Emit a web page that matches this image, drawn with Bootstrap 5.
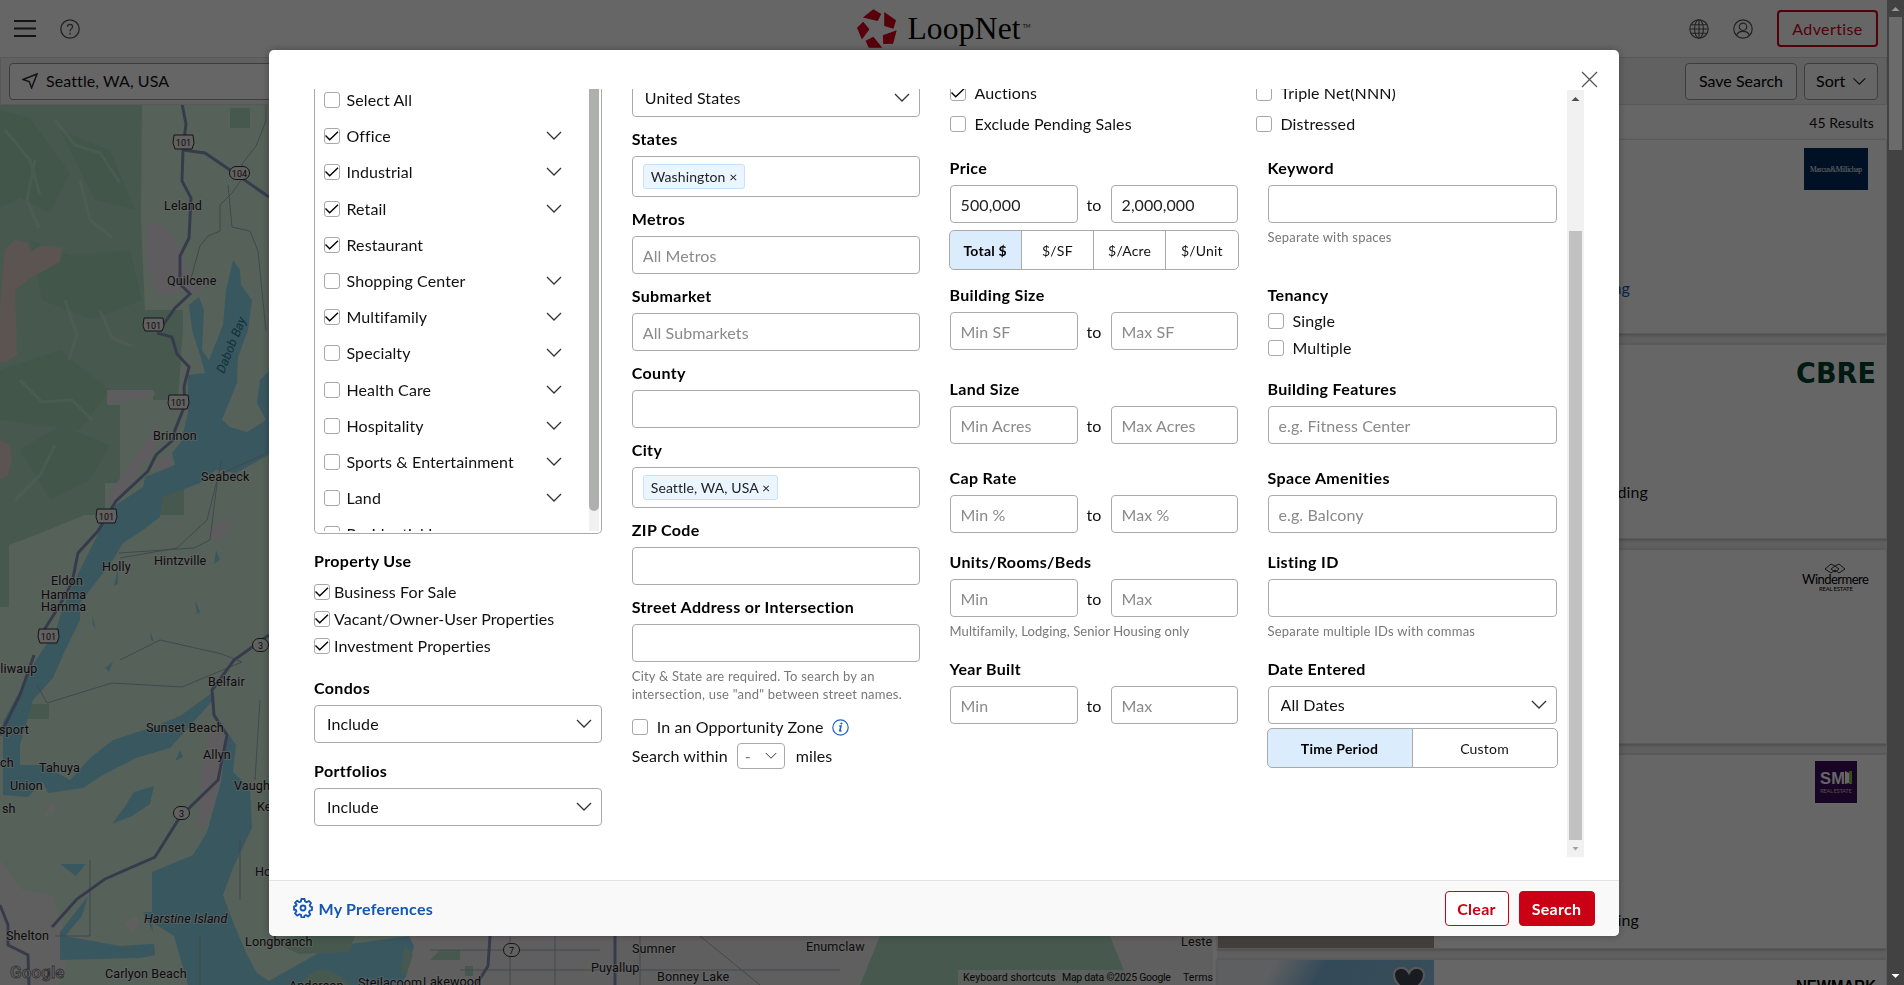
<!DOCTYPE html>
<html lang="en">
<head>
<meta charset="utf-8">
<title>LoopNet</title>
<link rel="stylesheet" href="https://cdn.jsdelivr.net/npm/bootstrap@5.3.0/dist/css/bootstrap.min.css">
<style>
html,body{height:100%;overflow:hidden}
body{font-family:Lato,"Open Sans",sans-serif;font-size:16px;color:#111;background:#fff;letter-spacing:.1px}
.page{width:1887px;height:985px;overflow:hidden}
.topbar{height:57px;flex:none}
.side{width:420px}
.subbar{height:48px;background:#f3f3f3;border:1px solid #dcdcdc}
.btn-page{height:37px;border:1px solid #999;border-radius:4px;background:#fff;font-size:16px;padding:0 11px;color:#000;white-space:nowrap}
.btn-adv{width:101px;height:37px;border:2px solid #d0021b;border-radius:4px;color:#d0021b;font-size:16px;padding:0;letter-spacing:.4px}
.place{width:420px;height:37px;border:1px solid #999;border-radius:4px;background:#fff;margin-left:8px;padding-left:12px;gap:8px}
.brandname{font-family:"Liberation Serif",serif;font-size:31.5px;line-height:40px;letter-spacing:.2px;color:#000}
.tm{font-size:5px;align-self:flex-start;margin:15px 0 0 2px}
.mapbox{width:1217px}
.results{width:670px;background:#ededed}
.resulthead{height:34px;background:#fff;font-size:14px;padding-right:13px}
.listing{height:195px;margin-bottom:10px;background:#fff;border:1px solid #e0e0e0;box-shadow:0 1px 3px rgba(0,0,0,.25);border-radius:0;flex:none}
.photo{width:216px;background:linear-gradient(#8ec3e6,#b9b2a8 80%,#a39a92)}
.sky{background:linear-gradient(120deg,#e9eef2 0 18%,#7fb8dc 34%,#9cc9e4)}
.logobox{width:82px;margin-right:9px;height:70px}
.veil{opacity:.6!important;width:1887px}
.pagebar{left:1887px;top:0;width:17px;height:985px;background:#424242;z-index:1060;padding:0 2px}
.pagebar .thumb{height:133px;background:#6b6b6b}
.pagebar svg,.formbar svg{display:block;flex:none}
.searchmodal{width:1887px;overflow:hidden}
.searchmodal .modal-dialog{max-width:1350px;margin:49.5px auto 0;width:1350px}
.searchmodal .modal-content{height:886px;border:0;border-radius:5px;overflow:hidden;color:#111;box-shadow:0 0 8px rgba(0,0,0,.3)}
.closerow{height:39.5px;padding:22px 22px 0 0;flex:none}
.closerow svg{overflow:visible}
.formarea{height:768px;overflow:hidden;flex:none;padding:0 35px 0 45.5px}
.colA{width:288px;margin-right:30px}
.colC{width:607px}
.formbar{width:17px;height:767px;margin-top:1px;background:#f1f1f1;margin-left:10px;padding:0 2px}
.formbar .thumb{height:609px;background:#c1c1c1}
.form-label{font-weight:700;line-height:22px;margin:0 0 6px;display:block;letter-spacing:.35px;color:#000}
.form-control,.form-select{height:38px;border:1px solid #aaa;border-radius:4px;padding:0 10px;font-size:16px;color:#222;letter-spacing:.1px;box-shadow:none;background-color:#fff}
.form-control::placeholder{color:#8a8a8a;opacity:1}
.form-select{padding-left:12px;color:#111;background-image:url("data:image/svg+xml,%3Csvg xmlns='http://www.w3.org/2000/svg' viewBox='0 0 16 10'%3E%3Cpath d='M1 1l7 7 7-7' fill='none' stroke='%23333' stroke-width='1.3'/%3E%3C/svg%3E");background-size:16px 10px;background-position:right 9px center}
.fld{padding-top:11px}
.tagbox{height:41px;padding:7px 10px}
.tagitem{display:inline-flex;height:25px;align-items:center;background:#ebf5ff;border:1px solid #c5e1fb;border-radius:3px;padding:0 7px;font-size:14px;white-space:nowrap;letter-spacing:.1px}
.cb.form-check-input{width:16px;height:16px;margin:0;border:1px solid #a8a8a8;border-radius:3px;float:none;flex:none;background-color:#fff}
.cb.form-check-input:checked{background-color:#fff;border-color:#a8a8a8;background-size:16px 16px;background-image:url("data:image/svg+xml,%3Csvg xmlns='http://www.w3.org/2000/svg' viewBox='0 0 16 16'%3E%3Cpath d='M1.5 7.5l4.2 4.2L14 3.8' fill='none' stroke='%23000' stroke-width='1.4'/%3E%3C/svg%3E")}
.typebox{height:445px;border:1px solid #aaa;border-top:0;border-radius:0 0 5px 5px;overflow:hidden;padding:0 2px 2px 0}
.typelist{margin-top:-7px;height:449px;overflow:hidden}
.typelist .trow{height:36.2px;padding-left:9px;padding-right:27px;gap:6.5px}
.typebar{width:10px;height:442px;background:#f1f1f1}
.typebar .thumb{height:422px;background:#aeb0ad;border-radius:0 0 5px 5px}
.use{height:27.3px;gap:4px}
.hint{font-size:13px;line-height:18px;color:#777;letter-spacing:.22px;padding-top:5px}
.topchecks{display:grid;grid-template-columns:306px 1fr;grid-auto-rows:31px;margin-top:-11.5px;height:79.5px}
.topchecks .crow{height:31px;gap:9px}
.fgrid{display:grid;grid-template-columns:288px 289px;column-gap:30px;grid-template-rows:127px 94px 89px 84px 107px 120px}
.range{display:grid;grid-template-columns:128px 33px 127px;align-items:center;text-align:center}
.range span{padding-top:1px}
.seg{height:40px;margin-left:-1px;margin-right:-1px}
.seg .btn{border:1px solid #aaa;font-size:14px;padding:0;color:#111;flex:1 1 0;border-radius:5px;letter-spacing:.2px}
.seg .btn.on{background:#dbecfd;font-weight:700;color:#000}
.foot{height:56px;border-top:1px solid #e2e2e2;background:#f9f9f9;padding:0 24px}
.foot .btn{height:35px;border-radius:4px;font-weight:700;padding:1px 0 0;border:1px solid #cc0014;letter-spacing:.3px}
.prefs{color:#1356b4;font-weight:700;letter-spacing:.22px}
.prefs span{padding-top:1px}
</style>
</head>
<body>
<div class="page d-flex flex-column">
  <header class="topbar d-flex align-items-center justify-content-between bg-white">
    <div class="side d-flex align-items-center" style="padding-left:14px">
      <svg width="22" height="17" viewBox="0 0 22 17"><path d="M0 1h22M0 8.500h22M0 16h22" stroke="#333" stroke-width="2"/></svg>
      <svg class="ms-4" width="20" height="20" viewBox="0 0 20 20" fill="none" stroke="#555" stroke-width="1.3"><circle cx="10" cy="10" r="9.2"/><path d="M7.4 7.8c0-3.2 5.2-3.2 5.2 0 0 2-2.6 2.2-2.6 4.4M10 13.8v1.6"/></svg>
    </div>
    <div class="d-flex align-items-center">
      <svg width="42" height="41" viewBox="54 21 128 123" fill="#d9001c"><path d="M107 24l24 14-11 22-45-11zM140 32l36 25-8 26-28-8zM136 103l42-15-11 41-30 1zM83 120l24-12 27 33H93zM57 80l19-18 19 23-23 31z"/></svg>
      <span class="brandname" style="margin-left:9px">LoopNet</span><span class="tm">TM</span>
    </div>
    <div class="side d-flex align-items-center justify-content-end" style="padding-right:9px">
      <svg width="20" height="20" viewBox="0 0 20 20" fill="none" stroke="#555" stroke-width="1.1"><circle cx="10" cy="10" r="9.2"/><ellipse cx="10" cy="10" rx="4.4" ry="9.2"/><path d="M10 1v18M1 10h18M2.2 5.8h15.6M2.2 14.2h15.6"/></svg>
      <svg style="margin:0 24px" width="20" height="20" viewBox="0 0 20 20" fill="none" stroke="#555" stroke-width="1.2"><circle cx="10" cy="10" r="9.2"/><circle cx="10" cy="7.8" r="3.7"/><path d="M3.600 16.400c1.600-5.400 11.200-5.400 12.800 0"/></svg>
      <button class="btn btn-adv">Advertise</button>
    </div>
  </header>
  <div class="subbar d-flex align-items-center flex-shrink-0">
    <div class="place d-flex align-items-center"><svg width="16" height="16" viewBox="0 0 16 16" fill="none" stroke="#333" stroke-width="1.5"><path d="M15 1L1 6.500l6.200 2L9.600 15z"/></svg><span>Seattle, WA, USA</span></div>
    <div class="ms-auto d-flex" style="gap:7px;padding-right:8px"><button class="btn-page" style="width:112px">Save Search</button><button class="btn-page d-flex align-items-center justify-content-center" style="width:74px;gap:8px">Sort <svg width="14" height="9" viewBox="0 0 14 9"><path d="M.5 1L7 7.500 13.500 1" fill="none" stroke="#222" stroke-width="1.300"/></svg></button></div>
  </div>
  <main class="d-flex flex-grow-1 overflow-hidden">
    <div class="mapbox">
      <svg width="1213" height="880" viewBox="0 105 1213 880" font-family="Roboto,sans-serif" font-size="12.600" style="display:block">
        <rect y="104" width="1213" height="881" fill="#d6f3e0"/>
        <path fill="#b1dfc2" d="M0 104H142L141 220 145 310H183V330L178 400H153V390H107V405H120V483H105V515H85L23 540 9 545V607H0zM230 108h20v20h-20zM160 483h24v32h-24zM28 704h21v15H28z"/>
        <g fill="#9fd0b2" opacity=".55"><path d="M0 110l30 8 40 55-20 40-30-15-20 10zM60 130l50 20 25 60-40-10zM30 240l40 15 60-5 12 50-50 20-50-20zM0 370l60-20 50 40-30 40-80-10zM20 450l40-25 50 20-20 35-40 20z"/></g>
        <g fill="none" stroke="#c7ebd2" stroke-width="3" opacity=".6"><path d="M5 130l25 30 10 35M55 120l20 25 25 8 20 30M35 160l-8 40 12 28M80 180l10 40 22 18M20 380l22 22 30-2 20 20M65 300l12 35-8 25M100 310l12 28 20 8M15 500l25-25 15-30"/></g>
        <path fill="#e6d2c8" d="M0 310L5 250 15 240 28 243 30 252 42 245 62 248 60 262 30 278 15 290 17 355 5 362H0zM0 440l10 5 2 15-4 15-8 4z"/>
        <path fill="#ece6ea" d="M147 225l10-3 15 12 12 22 6 22 13 5v10l-20-4-18 8-10-8-9-30zM107 390h46l2 5-48 9zM160 420l-2 20-5 15-15 15-5 15-22 18-5-1 10-18 25-35zM170 455l-12 6-6 8 16 2 2-8zM212 527l16-8 1 10-10 12-8-6zM185 365l7 15-8-4zM210 728l20 4-6 40-10 35-8 18-8 5 4-60z"/>
        <path fill="#f1edf0" d="M0 860l22 30 30 5 10 30 8 30-12 30H0zM48 808l8-5-3 11-9 3zM125 922l12-6 2 8-8 9zM405 936H1213V985H400z"/>
        <g fill="#90daee">
          <path d="M233 260l7 10 1 15 11 15-4 30-10 27-1 26-7 17-8 20 8 7 17 5 19-12-9-17 3-23 12-12v85l-36 20-20-3-16 13-37 14-3 20-17 13-20 13-10 17-33 43v17l-17 35-10 23-20 22-13 45v20h23l27 15 20-22 23-18 37-12 30-12 33-24 2 6-45 50-34 10-33 17-20 13-35 5-5-11-15 15-25-2V722l33-62 20-30 7-23 17-37 20-40 13-23 30-20 2-10 30-12-3-12 9-11 7-30V375l17-2-5-18-8-25-3-25 10-8 5 13-2 40 7 10 14-35 3-35z"/>
          <path d="M227 732l9 13-3 27 17 16 2 40-19 40-10 27 10 27 14 33 10 18 12 8 60-34 80-11 5 10-8 30-10 19H187l-5-30-12-17-17-16-10-20h9v-40l41-17 14-23 14-50z"/>
          <path d="M154 786l-4 18-18 12-20 8 12-16 10-16zM60 932l28-36-6 20-17 20 55 10 60-4 5 8-45 8-80 2zM60 864h26l-10 12zM216 550l4 10-6 4zM105 668l8-6-4 10zM180 750l3 7-8 4zM118 568l-4 18 4-2zM150 630l4 12-3-2zM195 600l5 12-3 2zM92 615l4 14-3-4z"/>
        </g>
        <path fill="#d6f3e0" d="M152 922l22 14 14 49h-30z"/>
        <path fill="#b1dfc2" d="M269 940l30-4h56l-6 16-50 2zM300 985q20-30 50 0zM405 945l8 10-6 18h-6zM440 950h20v10h-30zM465 966h8v10h-8zM880 936h230l20 49H860z"/>
        <g fill="none" stroke="#a5b3c0" stroke-width="1"><path d="M266 104v17l-10 25-14 18v15l-10 14-12 12v26l-12 5-8 10-10 36M228 185l4 42 18 4 8 20 8 80M263 455l-45 20-8 65-16 8-75 5M222 460l-15 60-30 28-57 10M120 660l40-20 62 14 20 8-60 25-70-4-65 20-10-18M90 860v76H55M200 936v49M240 840v60M260 700l-5 80M510 936v49M555 936v49M640 936v49M430 950h170M460 970h380M700 936l60 49"/></g>
        <g fill="none" stroke="#8794bd" stroke-width="3"><path d="M182 104l4 20-3 25-1 32 9 17-2 40-9 18v28l10 10-15 14-14 20M157 333l15 4 5 17 12 13-5 20 1 18-10 25-2 10-17 15-8 16-32 30-18 30-20 22-6 30-14 25-14 22M34 655l-14 40-20 40M183 150l22 3 25 17 39 27M269 635l-35 25-22 30 2 25 13 20-9 45-38 37-25 40-50 22-28 20-25 28M0 905l8 20v20l20 10 1 30M490 936l-2 30-12 19M615 936v49"/></g>
        <g fill="#f4f1f3" stroke="#333" stroke-width="1"><path d="M174 135h19l1 8-2 6H175l-2-6zM144 318h19l1 8-2 5H145l-2-5zM169 395h19l1 8-2 6H170l-2-6zM97 509h19l1 8-2 6H98l-2-6zM39 629h19l1 8-2 6H40l-2-6z"/><rect x="229.500" y="166.500" width="20" height="13" rx="6.500"/><rect x="252.500" y="638.500" width="16" height="13" rx="6.500"/><rect x="173.500" y="806.500" width="16" height="13" rx="6.500"/><rect x="503.500" y="943.500" width="16" height="13" rx="6.500"/></g>
        <g fill="#222" font-size="9" text-anchor="middle"><text x="183.500" y="145.500">101</text><text x="153.500" y="328.500">101</text><text x="178.500" y="406">101</text><text x="106.500" y="520">101</text><text x="48.500" y="640">101</text><text x="239.500" y="176.500">104</text><text x="260.500" y="648.500">3</text><text x="181.500" y="816.500">3</text><text x="511.500" y="953.500">7</text></g>
        <g fill="#222" stroke="#fff" stroke-width="2" stroke-opacity=".6" paint-order="stroke"><text x="164" y="210">Leland</text><text x="167" y="285">Quilcene</text><text x="153" y="440">Brinnon</text><text x="201" y="481">Seabeck</text><text x="102" y="571">Holly</text><text x="154" y="565">Hintzville</text><text x="51" y="585">Eldon</text><text x="41" y="599">Hamma</text><text x="41" y="611">Hamma</text><text x="-6" y="673">illiwaup</text><text x="208" y="686">Belfair</text><text x="-1" y="734">sport</text><text x="146" y="732">Sunset Beach</text><text x="203" y="759">Allyn</text><text x="0" y="767">ch</text><text x="39" y="772">Tahuya</text><text x="10" y="790">Union</text><text x="234" y="790">Vaughn</text><text x="2" y="813">sh</text><text x="257" y="811">Key</text><text x="255" y="876">Home</text><text x="6" y="940">Shelton</text><text x="144" y="923" font-style="italic">Harstine Island</text><text x="245" y="946">Longbranch</text><text x="105" y="978">Carlyon Beach</text><text x="358" y="987">Steilacoom</text><text x="423" y="986">Lakewood</text><text x="591" y="972">Puyallup</text><text x="632" y="953">Sumner</text><text x="657" y="981">Bonney Lake</text><text x="806" y="951">Enumclaw</text><text x="1181" y="946">Lester</text><text x="289" y="990">Anderson</text></g>
        <text transform="translate(224 374) rotate(-68)" fill="#2b7d96" font-style="italic">Dabob Bay</text>
        <text x="10" y="978" font-size="17" fill="#fff" stroke="#777" stroke-width=".8" font-weight="500">Google</text>
        <rect x="958" y="970" width="255" height="15" fill="#f5f5f5" opacity=".7"/>
        <g font-size="10.500" fill="#111"><text x="963" y="981">Keyboard shortcuts</text><text x="1062" y="981" textLength="109">Map data ©2025 Google</text><text x="1183" y="981">Terms</text></g>
      </svg>
    </div>
    <div class="results d-flex flex-column">
      <div class="resulthead flex-shrink-0 d-flex align-items-center justify-content-end">45 Results</div>
      <article class="listing d-flex"><div class="photo"></div><div class="flex-grow-1 text-end" style="padding:136px 165px 0 0;color:#1356b4">Office Building</div><div class="logobox d-flex justify-content-center" style="padding-top:8px"><svg width="64" height="42" viewBox="0 0 64 42"><rect width="64" height="42" fill="#002b5c"/><text x="32" y="23.500" fill="#fff" font-family="Liberation Serif" font-size="7.500" text-anchor="middle" textLength="52">Marcus&amp;Millichap</text></svg></div></article>
      <article class="listing d-flex"><div class="photo"></div><div class="flex-grow-1 text-end" style="padding:135px 147px 0 0">Office Building</div><div class="logobox"><svg width="82" height="50" viewBox="0 0 82 50"><text x="1" y="38" fill="#003f2d" font-family="DejaVu Sans" font-weight="700" font-size="27.500" textLength="80" lengthAdjust="spacingAndGlyphs">CBRE</text></svg></div></article>
      <article class="listing d-flex"><div class="photo"></div><div class="flex-grow-1"></div><div class="logobox"><svg width="82" height="50" viewBox="0 0 82 50"><path d="M36 19l4-3 4 3-4 3zM40 16l4-2 6 5-6 4-4-3M40 16l-4-2-6 5 6 4 4-3" fill="none" stroke="#333"/><text x="7" y="34" font-size="13" font-family="Lato" textLength="67">Windermere</text><text x="24" y="41" font-size="6" textLength="34">REAL ESTATE</text></svg></div></article>
      <article class="listing d-flex"><div class="photo"></div><div class="flex-grow-1 text-end" style="padding:153px 156px 0 0">Building</div><div class="logobox d-flex justify-content-center" style="padding-top:6px"><svg width="42" height="42" viewBox="0 0 42 42"><rect width="42" height="42" fill="#3c0a5e"/><text x="5" y="23" fill="#fff" font-family="Liberation Sans" font-weight="700" font-size="17" textLength="25" lengthAdjust="spacingAndGlyphs">SM</text><path d="M30 10l4 2v10l-4 1z" fill="#fff"/><path d="M34 10h3v13h-3z" fill="#7ac143"/><text x="5" y="32" fill="#cba" font-size="6" textLength="32">REAL ESTATE</text></svg></div></article>
      <article class="listing d-flex"><div class="photo sky text-end" style="padding:6px 8px 0 0"><svg width="34" height="31" viewBox="0 0 34 31"><path d="M17 28C6 19 2 15 2 9 2 1 13-1 17 7c4-8 15-6 15 2 0 6-4 10-15 19z" fill="#3c4650" stroke="#ddd" stroke-width="2"/></svg></div><div class="flex-grow-1"></div><div class="logobox"><svg width="82" height="50" viewBox="0 0 82 50"><text x="1" y="32" font-size="16" font-weight="700" font-family="Liberation Sans" textLength="80" lengthAdjust="spacingAndGlyphs">NEWMARK</text></svg></div></article>
    </div>
  </main>
</div>
<div class="modal-backdrop veil"></div>
<div class="pagebar position-fixed">
  <svg width="13" height="17" viewBox="0 0 13 17"><path d="M2.500 11L6.500 7l4 4z" fill="#999"/></svg>
  <div class="thumb"></div>
  <svg width="13" height="17" viewBox="0 0 13 17" style="margin-top:818px"><path d="M2.500 6l4 4 4-4z" fill="#fff"/></svg>
</div>

<div class="modal d-block searchmodal" tabindex="-1">
 <div class="modal-dialog"><div class="modal-content">
  <div class="closerow d-flex justify-content-end"><svg width="15" height="15" viewBox="0 0 15 15"><path d="M0 0l15 15M15 0L0 15" stroke="#555" stroke-width="1.300"/></svg></div>
  <div class="formarea d-flex">
   <div class="colA">
     <div class="typebox d-flex">
       <div class="typelist flex-grow-1" id="types"></div>
       <div class="typebar"><div class="thumb"></div></div>
     </div>
     <div style="padding:16px 0 9px"><label class="form-label m-0">Property Use</label></div>
     <div style="margin-top:-3px">
     <div class="use d-flex align-items-center"><input type="checkbox" class="form-check-input cb" checked>Business For Sale</div>
     <div class="use d-flex align-items-center"><input type="checkbox" class="form-check-input cb" checked>Vacant/Owner-User Properties</div>
     <div class="use d-flex align-items-center"><input type="checkbox" class="form-check-input cb" checked>Investment Properties</div>
     </div>
     <div style="padding-top:17px"><label class="form-label">Condos</label><select class="form-select"><option>Include</option></select></div>
     <div style="padding-top:17px"><label class="form-label">Portfolios</label><select class="form-select"><option>Include</option></select></div>
   </div>
   <div class="colA">
     <div style="margin-top:-10px"><select class="form-select"><option>United States</option></select></div>
     <div class="fld"><label class="form-label">States</label><div class="form-control tagbox d-flex"><span class="tagitem">Washington ×</span></div></div>
     <div class="fld"><label class="form-label">Metros</label><input class="form-control" placeholder="All Metros"></div>
     <div class="fld"><label class="form-label">Submarket</label><input class="form-control" placeholder="All Submarkets"></div>
     <div class="fld"><label class="form-label">County</label><input class="form-control"></div>
     <div class="fld"><label class="form-label">City</label><div class="form-control tagbox d-flex"><span class="tagitem">Seattle, WA, USA ×</span></div></div>
     <div class="fld"><label class="form-label">ZIP Code</label><input class="form-control"></div>
     <div class="fld"><label class="form-label">Street Address or Intersection</label><input class="form-control"></div>
     <div class="hint text-nowrap">City &amp; State are required. To search by an<br>intersection, use "and" between street names.</div>
     <div class="d-flex align-items-center" style="height:26px;margin-top:11px;gap:9px"><input type="checkbox" class="form-check-input cb"><span>In an Opportunity Zone</span><svg width="17" height="17" viewBox="0 0 17 17" fill="none" stroke="#1e62bd" stroke-width="1.200" style="margin-left:-1px"><circle cx="8.500" cy="8.500" r="7.700"/><path d="M7.200 7h1.800l-1.200 4.700q0 .8 1.600-.2" stroke-width="1.500"/><circle cx="9.400" cy="4.500" r=".7" fill="#1e62bd" stroke-width=".8"/></svg></div>
     <div class="d-flex align-items-center" style="margin-top:3px;height:26px"><span style="width:105px">Search within</span><select class="form-select" style="width:48px;height:26px;padding:0 0 0 7px;color:#777;background-size:12px 8px;background-position:right 7px center"><option>-</option></select><span style="margin-left:11px">miles</span></div>
   </div>
   <div class="colC">
     <div class="topchecks">
       <div class="crow d-flex align-items-center"><input type="checkbox" class="form-check-input cb" checked>Auctions</div>
       <div class="crow d-flex align-items-center"><input type="checkbox" class="form-check-input cb">Triple Net(NNN)</div>
       <div class="crow d-flex align-items-center"><input type="checkbox" class="form-check-input cb">Exclude Pending Sales</div>
       <div class="crow d-flex align-items-center"><input type="checkbox" class="form-check-input cb">Distressed</div>
     </div>
     <div class="fgrid">
       <div><label class="form-label">Price</label><div class="range"><input class="form-control" value="500,000"><span>to</span><input class="form-control" value="2,000,000"></div>
         <div class="btn-group seg d-flex" style="margin-top:7px"><button class="btn on">Total $</button><button class="btn">$/SF</button><button class="btn">$/Acre</button><button class="btn">$/Unit</button></div></div>
       <div><label class="form-label">Keyword</label><input class="form-control"><div class="hint">Separate with spaces</div></div>
       <div><label class="form-label">Building Size</label><div class="range"><input class="form-control" placeholder="Min SF"><span>to</span><input class="form-control" placeholder="Max SF"></div></div>
       <div><label class="form-label" style="margin-bottom:1px">Tenancy</label><div class="d-flex align-items-center use" style="gap:9px"><input type="checkbox" class="form-check-input cb">Single</div><div class="d-flex align-items-center use" style="gap:9px"><input type="checkbox" class="form-check-input cb">Multiple</div></div>
       <div><label class="form-label">Land Size</label><div class="range"><input class="form-control" placeholder="Min Acres"><span>to</span><input class="form-control" placeholder="Max Acres"></div></div>
       <div><label class="form-label">Building Features</label><input class="form-control" placeholder="e.g. Fitness Center"></div>
       <div><label class="form-label">Cap Rate</label><div class="range"><input class="form-control" placeholder="Min %"><span>to</span><input class="form-control" placeholder="Max %"></div></div>
       <div><label class="form-label">Space Amenities</label><input class="form-control" placeholder="e.g. Balcony"></div>
       <div><label class="form-label">Units/Rooms/Beds</label><div class="range"><input class="form-control" placeholder="Min"><span>to</span><input class="form-control" placeholder="Max"></div><div class="hint" style="letter-spacing:.1px">Multifamily, Lodging, Senior Housing only</div></div>
       <div><label class="form-label">Listing ID</label><input class="form-control"><div class="hint">Separate multiple IDs with commas</div></div>
       <div><label class="form-label">Year Built</label><div class="range"><input class="form-control" placeholder="Min"><span>to</span><input class="form-control" placeholder="Max"></div></div>
       <div><label class="form-label">Date Entered</label><select class="form-select"><option>All Dates</option></select>
         <div class="btn-group seg d-flex" style="margin-top:4px"><button class="btn on">Time Period</button><button class="btn">Custom</button></div></div>
     </div>
   </div>
   <div class="formbar"><svg width="13" height="17" viewBox="0 0 13 17"><path d="M2.500 11L6.500 7l4 4z" fill="#505050"/></svg><div style="height:124px"></div><div class="thumb"></div><svg width="13" height="17" viewBox="0 0 13 17"><path d="M3.500 7l3 3.500 3-3.500z" fill="#a3a3a3"/></svg></div>
  </div>
  <div class="foot d-flex align-items-center mt-auto">
    <a class="prefs text-decoration-none d-flex align-items-center" href="#" style="gap:6px"><svg width="20" height="20" viewBox="0 0 20 20" fill="none" stroke="#1356b4" stroke-width="1.800" stroke-linejoin="round"><circle cx="10" cy="10" r="2.500"/><path d="M8.400 1h3.200l.5 2.500 1.500.8 2.300-1.400 2.100 2.200-1.300 2.200.7 1.400 1.600.2v3.200l-2.300.5-.8 1.500 1.400 2.200-2.200 2.200-2.200-1.400-1.400.7-.3 1.500H8.400L8 16.900l-1.500-.7-2.200 1.400L2 15.400l1.400-2.200-.7-1.500L1 11.900V8.300l1.900-.3.7-1.500L2 4.900l2.200-2.200L6.400 4.200l1.500-.7z"/></svg><span>My Preferences</span></a>
    <button class="btn ms-auto" style="width:64px;color:#cc0014;background:#fff">Clear</button><button class="btn text-white" style="width:76px;margin-left:10px;background:#cc0014">Search</button>
  </div>
 </div></div>
</div>
<script src="https://cdn.jsdelivr.net/npm/bootstrap@5.3.0/dist/js/bootstrap.bundle.min.js"></script>
<script>
// name, checked, expandable
const types=[["Select All",0,0],["Office",1,1],["Industrial",1,1],["Retail",1,1],["Restaurant",1,0],["Shopping Center",0,1],["Multifamily",1,1],["Specialty",0,1],["Health Care",0,1],["Hospitality",0,1],["Sports & Entertainment",0,1],["Land",0,1],["Residential Income",0,0]];
document.getElementById("types").innerHTML=types.map(([n,c,e])=>`<div class="trow d-flex align-items-center"><input type="checkbox" class="form-check-input cb"${c?" checked":""}><span>${n.replace("&","&amp;")}</span>${e?'<svg class="ms-auto" width="16" height="10" viewBox="0 0 16 10"><path d="M1 1l7 7 7-7" fill="none" stroke="#333" stroke-width="1.300"/></svg>':""}</div>`).join("");
</script>
</body>
</html>
